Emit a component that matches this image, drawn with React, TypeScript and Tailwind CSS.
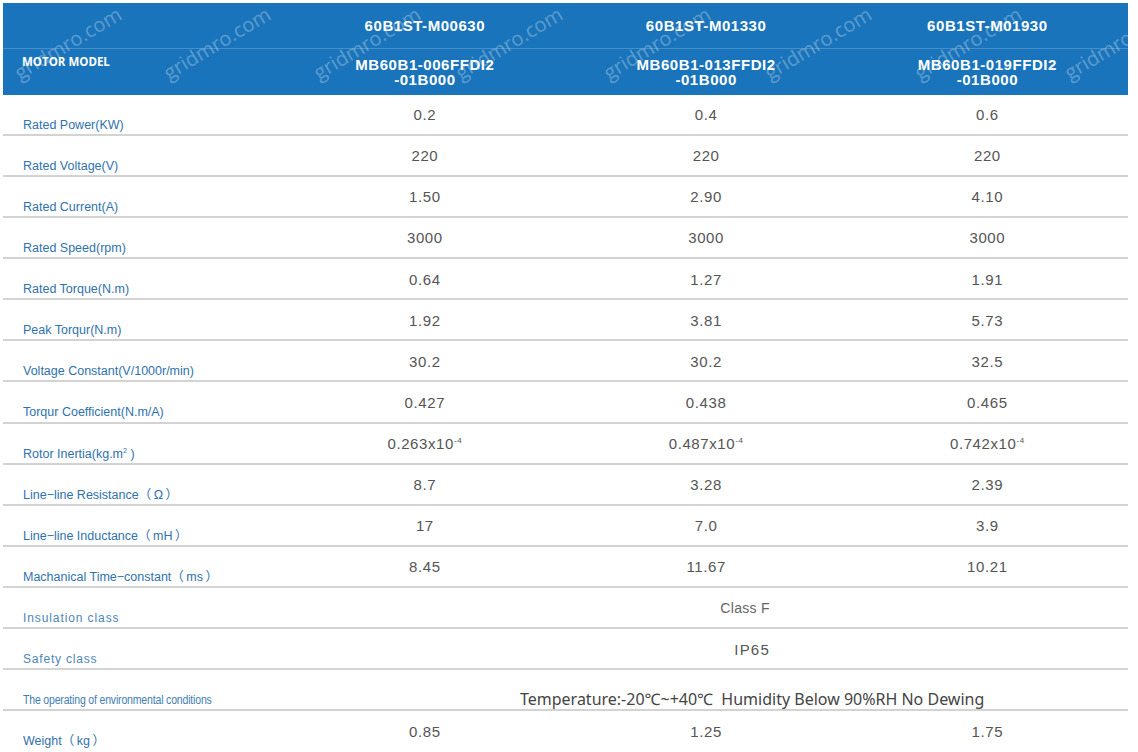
import React from "react";

type Row = { label: React.ReactNode; labelCls?: string; values?: React.ReactNode[]; merged?: React.ReactNode };

const sci = (n: string) => (
  <span>
    {n}x10<sup className="text-[8px] relative -top-[6px]">-4</sup>
  </span>
);

const rows: Row[] = [
  { label: "Rated Power(KW)", values: ["0.2", "0.4", "0.6"] },
  { label: "Rated Voltage(V)", values: ["220", "220", "220"] },
  { label: "Rated Current(A)", values: ["1.50", "2.90", "4.10"] },
  { label: "Rated Speed(rpm)", values: ["3000", "3000", "3000"] },
  { label: "Rated Torque(N.m)", values: ["0.64", "1.27", "1.91"] },
  { label: "Peak Torqur(N.m)", values: ["1.92", "3.81", "5.73"] },
  { label: "Voltage Constant(V/1000r/min)", values: ["30.2", "30.2", "32.5"] },
  { label: "Torqur Coefficient(N.m/A)", values: ["0.427", "0.438", "0.465"] },
  {
    label: (
      <span>
        Rotor Inertia(kg.m<sup className="text-[7px] relative -top-[5px]">2</sup> )
      </span>
    ),
    values: [sci("0.263"), sci("0.487"), sci("0.742")],
  },
  { label: "Line−line Resistance（\u2009Ω\u2009）", values: ["8.7", "3.28", "2.39"] },
  { label: "Line−line Inductance（\u2009mH\u2009）", values: ["17", "7.0", "3.9"] },
  { label: "Machanical Time−constant（\u2009ms\u2009）", values: ["8.45", "11.67", "10.21"] },
  {
    label: "Insulation class",
    labelCls: "tracking-[0.9px] text-[12px] text-[#4c86b8]",
    merged: <span className="text-[14px] tracking-[0.3px] text-[#666] pl-[78px]">Class F</span>,
  },
  {
    label: "Safety class",
    labelCls: "tracking-[0.8px] text-[12px] text-[#4c86b8]",
    merged: <span className="text-[15px] tracking-[1.2px] text-[#555] pl-[92px]">IP65</span>,
  },
  {
    label: (
      <span className="inline-block origin-left scale-x-[0.84] whitespace-nowrap tracking-[-0.2px]">
        The operating of environmental conditions
      </span>
    ),
    labelCls: "text-[12.5px] text-[#3f7db3]",
    merged: (
      <span className="font-['Noto_Sans','Noto_Sans_CJK_SC',sans-serif] text-[16px] text-[#444] pl-[92px] pt-[16px] whitespace-pre">
        Temperature:-20℃~+40℃  Humidity Below 90%RH No Dewing
      </span>
    ),
  },
  { label: "Weight（\u2009kg\u2009）", values: ["0.85", "1.25", "1.75"] },
];

const marks = [
  "left-[5px]",
  "left-[154px]",
  "left-[304px]",
  "left-[446px]",
  "left-[594px]",
  "left-[755px]",
  "left-[905px]",
  "left-[1055px]",
];

export default function App() {
  return (
    <div className="w-[1138px] h-[752px] overflow-hidden bg-white font-['Liberation_Sans','Noto_Sans_CJK_SC',sans-serif]">
      <div className="w-[1125px] ml-[3px] pt-[3px]">
        {/* header */}
        <div className="relative h-[92px] bg-[#1a74bb] overflow-hidden text-white">
          <div className="flex h-[46px] border-b border-[#4690ca]">
            <div className="w-1/4" />
            {["60B1ST-M00630", "60B1ST-M01330", "60B1ST-M01930"].map((t) => (
              <div key={t} className="w-1/4 flex items-center justify-center pt-[1px] font-bold text-[15px] tracking-[0.55px]">
                {t}
              </div>
            ))}
          </div>
          <div className="flex h-[46px]">
            <div className="w-1/4 pl-[19px] pt-[5px] font-['Open_Sans',sans-serif] font-bold text-[11.5px] leading-[16px]">
              MOTOR MODEL
            </div>
            {["MB60B1-006FFDI2", "MB60B1-013FFDI2", "MB60B1-019FFDI2"].map((t) => (
              <div key={t} className="w-1/4 flex flex-col items-center justify-center font-bold text-[15px] leading-[15px] tracking-[0.55px]">
                <span>{t}</span>
                <span>-01B000</span>
              </div>
            ))}
          </div>
          {marks.map((m) => (
            <span
              key={m}
              className={`absolute top-[30px] ${m} w-[118px] text-center -rotate-[31deg] font-['Open_Sans',sans-serif] text-[20px] leading-[22px] text-white/30 pointer-events-none`}
            >
              gridmro.com
            </span>
          ))}
        </div>
        {/* body */}
        {rows.map((r, i) => {
          const last = i === rows.length - 1;
          return (
            <div
              key={i}
              className={`flex h-[41.07px] ${last ? "" : "border-b-2 border-[#d3d3d3]"}`}
            >
              <div
                className={`w-1/4 pl-[20px] pt-[22px] leading-[16px] whitespace-nowrap ${
                  r.labelCls ?? "text-[12.5px] text-[#2f72ad]"
                }`}
              >
                {r.label}
              </div>
              {r.values ? (
                r.values.map((v, j) => (
                  <div
                    key={j}
                    className="w-1/4 flex items-center justify-center pt-[2px] text-[15px] tracking-[0.6px] text-[#555]"
                  >
                    {v}
                  </div>
                ))
              ) : (
                <div className="w-3/4 flex items-center justify-center pt-[3px]">{r.merged}</div>
              )}
            </div>
          );
        })}
      </div>
    </div>
  );
}
